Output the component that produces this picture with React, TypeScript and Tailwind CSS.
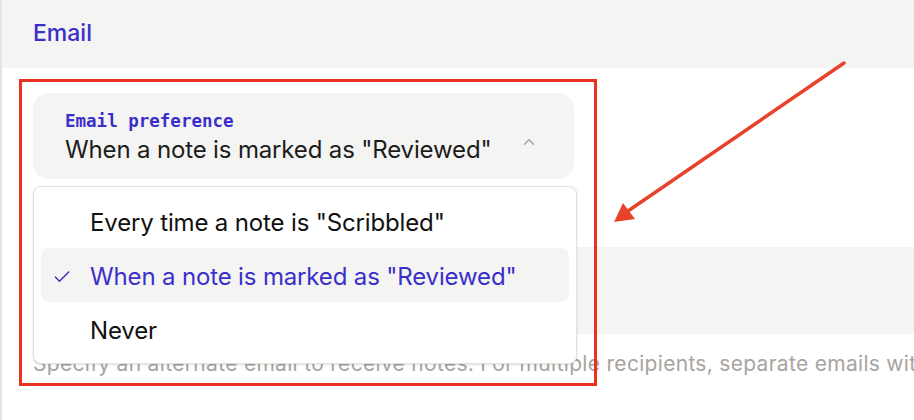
import React from 'react';
import { Check, ChevronUp } from 'lucide-react';

const OPTIONS = ['Every time a note is "Scribbled"', 'When a note is marked as "Reviewed"', 'Never'];

export default function App() {
  const selected = OPTIONS[1];

  return (
    <div className="relative h-[420px] w-[914px] overflow-hidden border-l-2 border-[#e4e4e2] bg-white font-['Inter',sans-serif]">
      <div className="flex h-[68px] items-center bg-[#f4f4f2] px-[31px] pb-[1px] text-[23px] font-medium text-[#3b2fcb]">Email</div>

      <div className="pl-[31px] pt-[25px]">
        <div className="flex h-[86px] w-[541px] items-center rounded-2xl bg-[#f4f4f2] pl-[32px] pr-[36px]">
          <div className="flex-1 pt-[4px]">
            <div className="font-['DejaVu_Sans_Mono',monospace] text-[17.5px] font-semibold leading-[20px] text-[#3b2fcb]">Email preference</div>
            <div className="mt-[4px] text-[24px] leading-[30px] tracking-[-0.15px] text-[#1c1c1c]">{selected}</div>
          </div>
          <ChevronUp size={18} strokeWidth={2} className="mt-[12px] text-[#a3a3a0]" />
        </div>

        <div className="mt-[68px] h-[87px] bg-[#f4f4f2]" />
        <p className="mt-[16px] whitespace-nowrap text-[21px] leading-[28px] tracking-[0.3px] text-[#a8a4a0]">
          Specify an alternate email to receive notes. For multiple recipients, separate emails with
        </p>
      </div>

      {/* open dropdown menu */}
      <div className="absolute left-[31px] top-[186px] w-[544px] rounded-lg border border-[#e2e2e0] bg-white p-[7px] shadow-sm">
        {OPTIONS.map(opt => {
          const active = opt === selected;
          return (
            <div
              key={opt}
              className={`flex h-[54px] items-center rounded-lg pt-[3px] text-[24px] tracking-[-0.15px] ${active ? 'bg-[#f4f4f2] text-[#3b2fcb]' : 'text-[#111]'}`}
            >
              <div className="w-[49px] pl-[11px]">
                {active && <Check size={20} strokeWidth={1.75} />}
              </div>
              {opt}
            </div>
          );
        })}
      </div>

      {/* annotation */}
      <div className="pointer-events-none absolute left-[17px] top-[79px] h-[307px] w-[578px] border-[3px] border-[#e8321f]" />
      <svg className="pointer-events-none absolute left-0 top-0" width="914" height="420">
        <line x1="842" y1="63" x2="626" y2="211" stroke="#e8422a" strokeWidth="3.5" strokeLinecap="round" />
        <polygon points="612,222 621,203 633,219" fill="#e8422a" />
      </svg>
    </div>
  );
}
